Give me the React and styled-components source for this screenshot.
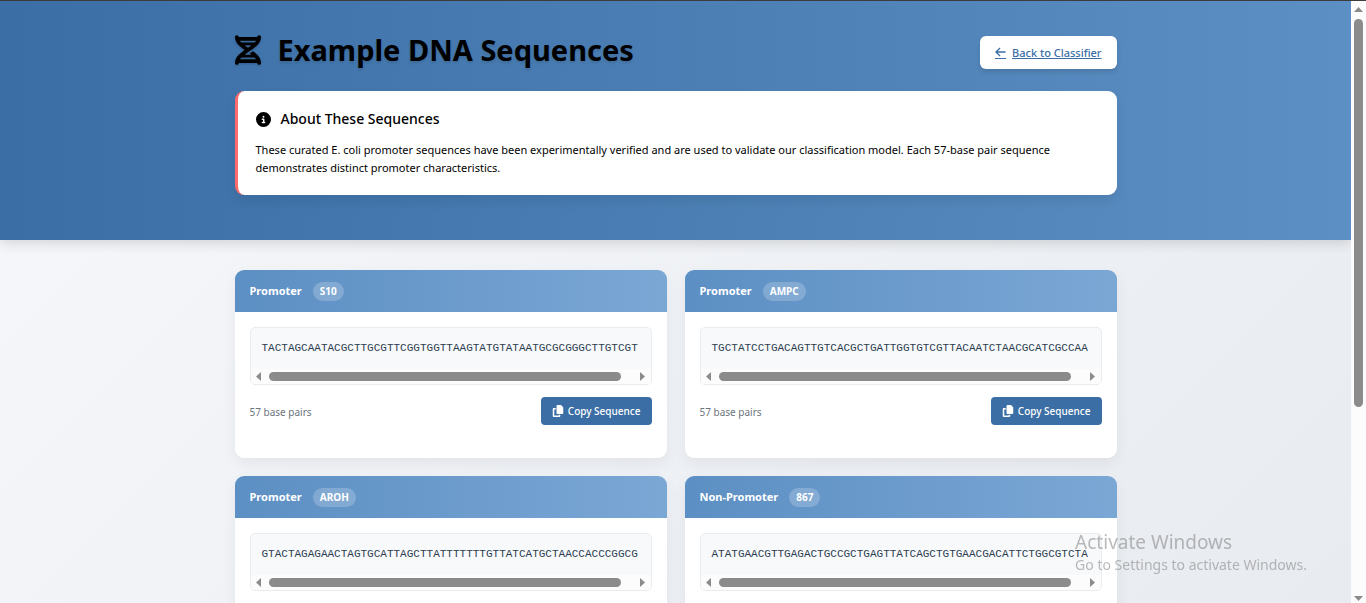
import React from "react";
import styled, { createGlobalStyle } from "styled-components";
import { FaCircleInfo, FaCopy, FaDna } from "react-icons/fa6";

const sans = '"Noto Sans", "Open Sans", sans-serif';

const GlobalStyle = createGlobalStyle`
  * { box-sizing: border-box; }
  body { margin: 0; font-family: ${sans}; color: #000; }
  h1, h2, h3, p { margin: 0; }
`;

const Shell = styled.div`
  display: flex;
  height: 100vh;
  border-top: 1px solid #3c3c3c;
  overflow: hidden;
`;

const Page = styled.div`
  flex: 1;
  min-width: 0;
  overflow-y: auto;
  scrollbar-width: none;
  background: linear-gradient(135deg, #f6f8fb 0%, #e8ebf0 100%);
`;

const Header = styled.header`
  padding: 30px 18px 45px;
  background: linear-gradient(90deg, #3a6ea5 0%, #5c8fc3 100%);
  box-shadow: 0 3px 12px rgba(0, 0, 0, 0.14);
`;

const Container = styled.div`
  max-width: 882px;
  margin: 0 auto;
`;

const TitleRow = styled.div`
  display: flex;
  align-items: center;
  justify-content: space-between;
  height: 42px;
  margin-bottom: 18px;
`;

const Title = styled.h1`
  display: flex;
  align-items: center;
  gap: 17px;
  padding-bottom: 4px;
  font-size: 29px;
  line-height: 40px;
  font-weight: 700;
  text-shadow: 0 2px 3px rgba(0, 0, 0, 0.12);
`;

const DnaIcon = styled(FaDna)`
  width: 26px;
  height: 30px;
  filter: drop-shadow(0 1px 1px rgba(0, 0, 0, 0.2));
`;

const BackLink = styled.a`
  display: inline-flex;
  align-items: center;
  gap: 6px;
  padding: 8px 15px 7px;
  border-radius: 6px;
  background: #fff;
  color: #3a6ea5;
  font-size: 11px;
  line-height: 18px;
  font-weight: 500;
  box-shadow: 0 3px 5px rgba(0, 0, 0, 0.12);
`;

const BackArrow = styled.svg`
  width: 11px;
  height: 12px;
  fill: none;
  stroke: currentColor;
`;

const About = styled.section`
  padding: 17px 18px 18px;
  border-left: 3px solid #ff6b6b;
  border-radius: 9px;
  background: #fff;
  box-shadow: 0 6px 12px rgba(0, 0, 0, 0.08);
`;

const AboutTitle = styled.h2`
  display: flex;
  align-items: center;
  gap: 10px;
  margin-bottom: 11px;
  font-size: 14px;
  line-height: 22px;
  font-weight: 500;
`;

const AboutText = styled.p`
  font-size: 11px;
  line-height: 18px;
`;

const Cards = styled.main`
  display: grid;
  grid-template-columns: repeat(2, minmax(0, 1fr));
  gap: 18px;
  max-width: 882px;
  margin: 30px auto;
`;

const Card = styled.article`
  border-radius: 9px;
  background: #fff;
  overflow: hidden;
  box-shadow: 0 6px 15px rgba(0, 0, 0, 0.06);
`;

const CardHead = styled.header`
  display: flex;
  align-items: center;
  gap: 11px;
  height: 42px;
  padding: 0 15px;
  background: linear-gradient(90deg, #5c8fc3 0%, #7ba7d5 100%);
  color: #fff;
`;

const CardTitle = styled.h3`
  font-size: 11px;
  line-height: 18px;
  font-weight: 700;
`;

const Tag = styled.span`
  padding: 2px 7px;
  border-radius: 10px;
  background: rgba(255, 255, 255, 0.2);
  font-size: 10px;
  line-height: 15px;
  font-weight: 700;
`;

const CardBody = styled.div`
  padding: 15px 15px 33px;
`;

const SequenceBox = styled.div`
  margin-bottom: 12px;
  border: 1px solid #e9ecef;
  border-radius: 5px;
  background: #f8f9fb;
  overflow: hidden;
`;

const Sequence = styled.div`
  padding: 12px 11px 12px;
  overflow: hidden;
  color: #2c3e50;
  font-family: "Liberation Mono", monospace;
  font-size: 11px;
  line-height: 17px;
  white-space: nowrap;
`;

const HorizontalBar = styled.div`
  display: flex;
  align-items: center;
  height: 15px;
  padding: 0 6px 0 5px;
  background: #fcfcfc;
  color: #8b8b8b;
`;

const HorizontalTrack = styled.div`
  flex: 1;
  margin: 0 8px;
`;

const HorizontalThumb = styled.div`
  width: 97%;
  height: 9px;
  border-radius: 5px;
  background: #8b8b8b;
`;

const CardFoot = styled.div`
  display: flex;
  align-items: center;
  justify-content: space-between;
`;

const Length = styled.span`
  padding-top: 2px;
  color: #6c757d;
  font-size: 10px;
  line-height: 15px;
`;

const CopyButton = styled.button`
  display: flex;
  align-items: center;
  gap: 4px;
  height: 28px;
  padding: 0 11px;
  border: 0;
  border-radius: 4px;
  background: #3a6ea5;
  color: #fff;
  font: 500 10px/16px ${sans};
`;

const VerticalBar = styled.div`
  display: flex;
  flex-direction: column;
  align-items: center;
  width: 15px;
  padding: 6px 0 2px;
  background: #fcfcfc;
  color: #8b8b8b;
`;

const VerticalTrack = styled.div`
  flex: 1;
  margin: 7px 0;
`;

const VerticalThumb = styled.div`
  width: 9px;
  height: 68%;
  border-radius: 5px;
  background: #8b8b8b;
`;

const Watermark = styled.div`
  position: fixed;
  right: 59px;
  bottom: 28px;
  color: rgba(130, 130, 130, 0.55);
  pointer-events: none;
`;

const WatermarkTitle = styled.p`
  font-size: 19px;
  line-height: 26px;
`;

const WatermarkText = styled.p`
  font-size: 14px;
  line-height: 20px;
`;

const arrows = {
  left: ["M5 0 0 4.500 5 9z", 5, 9],
  right: ["M0 0 5 4.500 0 9z", 5, 9],
  up: ["M0 5 4.500 0 9 5z", 9, 5],
  down: ["M0 0 4.500 5 9 0z", 9, 5],
};

function Arrow({ to }) {
  const [d, w, h] = arrows[to];
  return (
    <svg width={w} height={h} viewBox={`0 0 ${w} ${h}`} fill="currentColor" aria-hidden="true">
      <path d={d} />
    </svg>
  );
}

const sequences = [
  { kind: "Promoter", name: "S10", bases: "TACTAGCAATACGCTTGCGTTCGGTGGTTAAGTATGTATAATGCGCGGGCTTGTCGT" },
  { kind: "Promoter", name: "AMPC", bases: "TGCTATCCTGACAGTTGTCACGCTGATTGGTGTCGTTACAATCTAACGCATCGCCAA" },
  { kind: "Promoter", name: "AROH", bases: "GTACTAGAGAACTAGTGCATTAGCTTATTTTTTTGTTATCATGCTAACCACCCGGCG" },
  { kind: "Non-Promoter", name: "867", bases: "ATATGAACGTTGAGACTGCCGCTGAGTTATCAGCTGTGAACGACATTCTGGCGTCTA" },
];

function SequenceCard({ kind, name, bases }) {
  return (
    <Card>
      <CardHead>
        <CardTitle>{kind}</CardTitle>
        <Tag>{name}</Tag>
      </CardHead>
      <CardBody>
        <SequenceBox>
          <Sequence>{bases}</Sequence>
          <HorizontalBar>
            <Arrow to="left" />
            <HorizontalTrack>
              <HorizontalThumb />
            </HorizontalTrack>
            <Arrow to="right" />
          </HorizontalBar>
        </SequenceBox>
        <CardFoot>
          <Length>57 base pairs</Length>
          <CopyButton type="button">
            <FaCopy size={12} />
            Copy Sequence
          </CopyButton>
        </CardFoot>
      </CardBody>
    </Card>
  );
}

export default function App() {
  return (
    <>
      <GlobalStyle />
      <Shell>
        <Page>
          <Header>
            <Container>
              <TitleRow>
                <Title>
                  <DnaIcon />
                  Example DNA Sequences
                </Title>
                <BackLink href="#classifier">
                  <BackArrow viewBox="0 0 11 12" aria-hidden="true">
                    <path d="M10.500 5H1M5 1 1 5l4 4" strokeWidth="1.300" />
                    <path d="M0 11.500h11" />
                  </BackArrow>
                  <span>Back to Classifier</span>
                </BackLink>
              </TitleRow>
              <About>
                <AboutTitle>
                  <FaCircleInfo size={15} />
                  About These Sequences
                </AboutTitle>
                <AboutText>
                  These curated E. coli promoter sequences have been experimentally verified and are used to
                  validate our classification model. Each 57-base pair sequence demonstrates distinct promoter
                  characteristics.
                </AboutText>
              </About>
            </Container>
          </Header>
          <Cards>
            {sequences.map((s) => (
              <SequenceCard key={s.name} {...s} />
            ))}
          </Cards>
        </Page>
        <VerticalBar>
          <Arrow to="up" />
          <VerticalTrack>
            <VerticalThumb />
          </VerticalTrack>
          <Arrow to="down" />
        </VerticalBar>
      </Shell>
      <Watermark>
        <WatermarkTitle>Activate Windows</WatermarkTitle>
        <WatermarkText>Go to Settings to activate Windows.</WatermarkText>
      </Watermark>
    </>
  );
}
